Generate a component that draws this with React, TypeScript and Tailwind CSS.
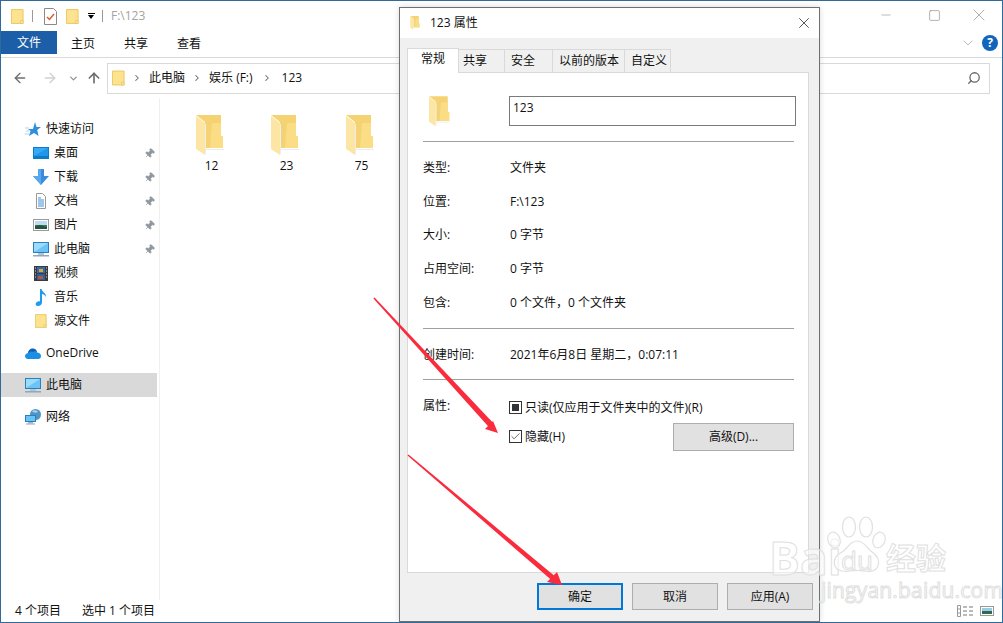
import React from 'react';
import { ArrowLeft, ArrowRight, ArrowUp, ChevronDown, ChevronRight, Minus, Search, Square, X, Pin, Check } from 'lucide-react';

const NoteFolder = ({ className = '' }: { className?: string }) => (
  <svg viewBox="0 0 14 16" className={className}>
    <path d="M.5.5h12.5v15H.5z" fill="#fde28f" stroke="#e9c65c" />
    <path d="M10.5 15.5v-3h2.5v3z" fill="#fff3c4" stroke="#e9c65c" />
  </svg>
);

const OpenFolder = ({ className = '' }: { className?: string }) => (
  <svg viewBox="0 0 28 41" className={className}>
    <path d="M9 34h19v1H11z" fill="#ececec" />
    <path d="M0 0H25V21H27V33H9V7z" fill="#f5d372" />
    <path d="M16 8H25V21H27V33H14z" fill="#fadd85" />
    <path d="M0 1L9 8V40L0 34z" fill="#fde6a3" />
    <path d="M9 8V40l1-1V10z" fill="#eeeeee" />
  </svg>
);

const Desktop = () => (
  <svg viewBox="0 0 16 12" className="w-4 h-3">
    <rect width="16" height="12" fill="#0a7cc9" />
    <path d="M1 1h14v8H1z" fill="#38aaf5" />
    <path d="M1 9L15 1v8z" fill="#1e97ea" />
  </svg>
);
const Download = () => (
  <svg viewBox="0 0 16 16" className="w-4 h-4">
    <path d="M5 0h6v7h5l-8 9-8-9h5z" fill="#3a8ce0" />
    <path d="M5 0h3v16L0 7h5z" fill="#5aa7ea" />
  </svg>
);
const Doc = () => (
  <svg viewBox="0 0 14 16" className="w-[14px] h-4">
    <path d="M2.5.5h6l3 3v12h-9z" fill="#fff" stroke="#999" />
    <path d="M4 5h3M4 7h6M4 9h6M4 11h6M4 13h6" stroke="#3c8fd6" />
  </svg>
);
const Picture = () => (
  <svg viewBox="0 0 16 12" className="w-4 h-3">
    <rect x=".5" y=".5" width="15" height="11" fill="#fff" stroke="#9a9a9a" />
    <rect x="2" y="2" width="12" height="4" fill="#bcdcf2" />
    <rect x="2" y="6" width="12" height="4" fill="#3e7a5c" />
    <path d="M2 7l5-1 7 2v2H2z" fill="#24543f" />
  </svg>
);
const Computer = () => (
  <svg viewBox="0 0 16 15" className="w-4 h-[15px]">
    <rect x=".5" y=".5" width="15" height="10" fill="#6bc3f7" stroke="#2d7fb8" />
    <path d="M1 1h14L1 10z" fill="#9bdcfc" />
    <rect x="5" y="11" width="6" height="2" fill="#b5c4d0" />
    <rect y="13" width="16" height="1.5" fill="#8fa8ba" />
  </svg>
);
const Video = () => (
  <svg viewBox="0 0 14 15" className="w-[14px] h-[15px]">
    <rect width="14" height="15" fill="#3a3a3a" />
    <rect x="3" y="1" width="8" height="6" fill="#2f6db0" />
    <rect x="3" y="8" width="8" height="6" fill="#2f5f9c" />
    <path d="M5 3h4v3H5z" fill="#d9a441" />
    <path d="M4 10h5v3H4z" fill="#b8553a" />
    <path d="M1 2h1M1 5h1M1 8h1M1 11h1M12 2h1M12 5h1M12 8h1M12 11h1" stroke="#ddd" />
  </svg>
);
const Music = () => (
  <svg viewBox="0 0 12 17" className="w-3 h-[17px]">
    <path d="M5 0h1.5c.5 3 5 4 4.500 8-.8-2-3-3-4-3v8.500c0 2-2 3.500-4 3.500S0 15.500 1 14s3-2 4-1.500z" fill="#1e9bf0" />
  </svg>
);
const OneDrive = () => (
  <svg viewBox="0 0 16 11" className="w-4 h-[11px]">
    <path d="M3 5c0-3 3-5 5.500-4.500C10.500.8 12 2.500 12 4.500z" fill="#0b5fb8" />
    <path d="M3 11C1 11 0 9.500 0 8s1.500-3 3.500-3c1-1.500 3-2 4.500-1 1-1 3-1 4 .5 2 0 4 1.500 4 3.500s-1 3-3 3z" fill="#1a8fe3" />
  </svg>
);
const Network = () => (
  <svg viewBox="0 0 16 16" className="w-4 h-4">
    <circle cx="10.500" cy="5.500" r="5.500" fill="#4f93c9" />
    <path d="M7 2c2-1.500 5-1 6 1-2 1-5 1-6-1z" fill="#a5d4f2" />
    <rect x=".5" y="6.500" width="10" height="6" fill="#6bc3f7" stroke="#2d7fb8" />
    <rect x="3" y="13" width="5" height="1.500" fill="#9fb4c4" />
    <rect x="1" y="14.500" width="9" height="1" fill="#8fa8ba" />
  </svg>
);
const Star = () => (
  <svg viewBox="0 0 16 15" className="w-4 h-[15px]">
    <path d="M10 0l1.500 5H16l-3.800 3 1.400 6L9 11l-5 3 1.600-5L3 7h5z" fill="#2f8fdc" />
    <path d="M0 6h4M1 9h3M0 12h4" stroke="#a9d2f2" />
  </svg>
);

const sideItems = [
  { name: '桌面', icon: <Desktop />, pin: true },
  { name: '下载', icon: <Download />, pin: true },
  { name: '文档', icon: <Doc />, pin: true },
  { name: '图片', icon: <Picture />, pin: true },
  { name: '此电脑', icon: <Computer />, pin: true },
  { name: '视频', icon: <Video /> },
  { name: '音乐', icon: <Music /> },
  { name: '源文件', icon: <NoteFolder className="w-3 h-4" /> },
];

function SideRoot({ icon, name, className = '' }: { icon: React.ReactNode; name: string; className?: string }) {
  return (
    <div className={`h-6 flex items-center pl-6 ${className}`}>
      <span className="w-4 flex justify-center">{icon}</span>
      <span className="ml-[5px]">{name}</span>
    </div>
  );
}

function InfoRow({ label, value }: { label: string; value: string }) {
  return (
    <div className="h-[33.75px] flex items-center">
      <span className="w-[87px]">{label}</span>
      <span>{value}</span>
    </div>
  );
}

function Tab({ label, className }: { label: string; className: string }) {
  return <div className={`h-[23px] flex items-center bg-[#f0f0f0] border-t border-r border-[#d9d9d9] ${className}`}>{label}</div>;
}

function DialogButton({ label, primary }: { label: string; primary?: boolean }) {
  return (
    <div className={`w-[86px] h-[27px] flex items-center justify-center bg-[#e1e1e1] ${primary ? 'border-2 border-[#0078d7]' : 'border border-[#adadad]'}`}>
      {label}
    </div>
  );
}

function PropertiesDialog() {
  return (
    <div className="absolute left-[398px] top-[6px] w-[421px] h-[615px] border border-[#6f6f6f] bg-[#f0f0f0] flex flex-col shadow-[0_0_6px_rgba(0,0,0,0.15)]">
      <div className="h-[30px] bg-white flex items-center pl-[10px] pr-[6px]">
        <OpenFolder className="w-[10px] h-[14px]" />
        <span className="ml-[10px]">123 属性</span>
        <X className="ml-auto w-[18px] h-[18px] text-[#222]" strokeWidth={1} />
      </div>
      <div className="flex items-end pl-[7px] h-[34px]">
        <div className="w-[52px] h-[25px] bg-white border border-b-0 border-[#d9d9d9] flex items-center justify-center relative top-px z-10 pb-[4px]">常规</div>
        <Tab label="共享" className="w-[46px] pl-[4px]" />
        <Tab label="安全" className="w-[48px] pl-[6px]" />
        <Tab label="以前的版本" className="w-[72px] pl-[6px]" />
        <Tab label="自定义" className="w-[46px] pl-[6px]" />
      </div>
      <div className="ml-[7px] mr-[10px] h-[501px] bg-white border border-[#d9d9d9] pl-[15px] pr-[14px] pt-[23px]">
        <div className="flex items-center h-[30px]">
          <span className="w-[86px] shrink-0 pl-[6px]">
            <OpenFolder className="w-[21px] h-[41px]" />
          </span>
          <div className="w-[287px] shrink-0 h-[30px] border border-[#7a7a7a] px-[3px] pt-[2px]">123</div>
        </div>
        <div className="mt-[15px] h-px bg-[#a0a0a0]" />
        <div className="mt-[9px]">
          <InfoRow label="类型:" value="文件夹" />
          <InfoRow label="位置:" value="F:\123" />
          <InfoRow label="大小:" value="0 字节" />
          <InfoRow label="占用空间:" value="0 字节" />
          <InfoRow label="包含:" value="0 个文件，0 个文件夹" />
        </div>
        <div className="mt-[8.25px] h-px bg-[#a0a0a0]" />
        <div className="mt-[9px]">
          <InfoRow label="创建时间:" value="2021年6月8日 星期二，0:07:11" />
        </div>
        <div className="mt-[7px] h-px bg-[#a0a0a0]" />
        <div className="flex mt-[18px]">
          <span className="w-[86px] leading-[16px]">属性:</span>
          <div className="flex-1 pt-[2px]">
            <div className="flex items-center h-4">
              <span className="w-[13px] h-[13px] border border-[#333] flex items-center justify-center">
                <span className="w-[7px] h-[7px] bg-[#333]" />
              </span>
              <span className="ml-[3px]">只读(仅应用于文件夹中的文件)(R)</span>
            </div>
            <div className="flex items-center justify-between mt-[7px]">
              <div className="flex items-center">
                <span className="w-[13px] h-[13px] border border-[#333] flex items-center justify-center">
                  <Check className="w-[11px] h-[11px] text-[#333]" strokeWidth={1.6} />
                </span>
                <span className="ml-[3px]">隐藏(H)</span>
              </div>
              <div className="w-[121px] h-[28px] bg-[#e1e1e1] border border-[#adadad] flex items-center justify-center">高级(D)...</div>
            </div>
          </div>
        </div>
      </div>
      <div className="flex justify-end gap-[9px] pr-[6px] mt-[10px]">
        <DialogButton label="确定" primary />
        <DialogButton label="取消" />
        <DialogButton label="应用(A)" />
      </div>
    </div>
  );
}

function Watermark() {
  const outline = 'text-white/50 [-webkit-text-stroke:1px_#e0e0e0]';
  return (
    <>
      <span className={`absolute left-[768px] top-[528px] text-[46px] font-bold leading-[56px] ${outline}`}>Bai</span>
      <svg viewBox="0 0 60 60" className="absolute left-[826px] top-[514px] w-[60px] h-[60px]" fill="rgba(255,255,255,.5)" stroke="#e0e0e0" strokeWidth="1.2">
        <ellipse cx="7" cy="25" rx="6" ry="8" transform="rotate(-20 7 25)" />
        <ellipse cx="22" cy="12" rx="6.500" ry="10" />
        <ellipse cx="39" cy="12" rx="6.500" ry="10" />
        <ellipse cx="52" cy="25" rx="6" ry="8" transform="rotate(20 52 25)" />
        <path d="M30 26c8 0 10 8 15 11 6 4 8 8 6 14-2 5-8 6-14 5-5-1-9-1-14 0-6 1-13 0-15-5-2-6 1-11 7-14 6-3 7-11 15-11z" />
      </svg>
      <span className={`absolute left-[840px] top-[544px] text-[26px] leading-[30px] ${outline}`}>du</span>
      <span className={`absolute left-[885px] top-[538px] text-[30px] font-bold leading-[38px] ${outline}`}>经验</span>
      <span className={`absolute left-[820px] top-[576px] text-[21px] leading-[26px] tracking-[0.2px] ${outline}`}>jingyan.baidu.com</span>
    </>
  );
}

function RedArrows() {
  return (
    <svg viewBox="0 0 1003 623" className="absolute -left-px -top-px w-[1003px] h-[623px] pointer-events-none">
      <path d="M374.600 297.600L493.200 423 488.800 427 373.400 298.600z" fill="#f92b3c" />
      <path d="M493 421L498 433 485 429z" fill="#f92b3c" />
      <path d="M408.500 454.400L554.600 576 551.400 580 407.500 455.600z" fill="#f92b3c" />
      <path d="M557 572L562 585 547 582z" fill="#f92b3c" />
    </svg>
  );
}

export default function App() {
  return (
    <div className="relative w-[1003px] h-[623px] overflow-hidden bg-white border border-[#2f6b9a] text-[12px] text-[#111] font-['Open_Sans','Noto_Sans_CJK_SC',sans-serif] flex flex-col">
      {/* title bar */}
      <div className="h-[30px] flex items-center pl-[10px]">
        <NoteFolder className="w-[13px] h-[15px]" />
        <span className="ml-[8px] w-px h-[12px] bg-[#999]" />
        <svg viewBox="0 0 13 17" className="ml-[11px] w-[13px] h-[17px]">
          <path d="M.5.5h9l3 3v13H.5z" fill="#fff" stroke="#8a8a8a" />
          <path d="M3 9l2.500 2.500L10 6" fill="none" stroke="#e0552a" strokeWidth="1.4" />
        </svg>
        <NoteFolder className="ml-[9px] w-[13px] h-[15px]" />
        <span className="ml-[8px] flex flex-col items-center w-[8px]">
          <span className="w-[7px] h-px bg-black mb-px" />
          <span className="border-x-[3.500px] border-x-transparent border-t-[4px] border-t-black" />
        </span>
        <span className="ml-[7px] w-px h-[12px] bg-[#999]" />
        <span className="ml-[8px] text-[#a3a3a3]">F:\123</span>
        <div className="ml-auto flex items-center pr-[13px] pb-[2px] text-[#8a8a8a]">
          <Minus className="w-[14px] h-[14px]" strokeWidth={1} />
          <Square className="ml-[35px] w-[13px] h-[13px]" strokeWidth={1.2} />
          <X className="ml-[28px] w-[20px] h-[20px]" strokeWidth={0.8} />
        </div>
      </div>
      {/* ribbon tabs */}
      <div className="h-[23px] flex items-center relative">
        <div className="w-[56px] h-[23px] bg-[#1c5fa8] text-white flex items-center justify-center pt-px">文件</div>
        <span className="ml-[14px] pt-[2px]">主页</span>
        <span className="ml-[29px] pt-[2px]">共享</span>
        <span className="ml-[29px] pt-[2px]">查看</span>
        <ChevronDown className="ml-auto w-[16px] h-[16px] text-[#aaa]" strokeWidth={1.2} />
        <span className="ml-[6px] mr-[4px] w-[16px] h-[16px] rounded-full bg-[#1166bb] text-white font-bold text-[12px] flex items-center justify-center">?</span>
      </div>
      {/* nav */}
      <div className="mt-[3px] border-t border-[#dadada] h-[41px] flex items-center">
        <ArrowLeft className="ml-[11px] w-[16px] h-[16px] text-[#6e6e6e]" strokeWidth={2} />
        <ArrowRight className="ml-[14px] w-[16px] h-[16px] text-[#d0d0d0]" strokeWidth={2} />
        <ChevronDown className="ml-[10px] w-[11px] h-[11px] text-[#8a8a8a]" strokeWidth={2.500} />
        <ArrowUp className="ml-[7px] w-[16px] h-[16px] text-[#6e6e6e]" strokeWidth={2.500} />
        <div className="ml-[5px] w-[700px] h-[31px] border border-[#d9d9d9] flex items-center pl-[4px]">
          <NoteFolder className="w-[13px] h-[16px]" />
          <ChevronRight className="ml-[7px] w-[10px] h-[10px] text-[#666]" strokeWidth={2.500} />
          <span className="ml-[7px]">此电脑</span>
          <ChevronRight className="ml-[7px] w-[10px] h-[10px] text-[#666]" strokeWidth={2.500} />
          <span className="ml-[7px]">娱乐 (F:)</span>
          <ChevronRight className="ml-[9px] w-[10px] h-[10px] text-[#666]" strokeWidth={2.500} />
          <span className="ml-[10px]">123</span>
        </div>
        <div className="ml-[5px] w-[178px] h-[31px] border border-[#d9d9d9] flex items-center justify-end pr-[8px]">
          <Search className="w-[14px] h-[14px] text-[#666] -scale-x-100" strokeWidth={2.200} />
        </div>
      </div>
      {/* body */}
      <div className="flex-1 flex min-h-0">
        <div className="w-[159px] border-r border-[#f0f0f0] pt-[19px]">
          <SideRoot icon={<Star />} name="快速访问" />
          {sideItems.map(item => (
            <div key={item.name} className="h-6 flex items-center pl-8">
              <span className="w-4 flex justify-center">{item.icon}</span>
              <span className="ml-[5px]">{item.name}</span>
              {item.pin && <Pin className="ml-auto mr-[4px] w-[11px] h-[11px] text-[#8f979e] fill-[#8f979e] rotate-45" strokeWidth={1.500} />}
            </div>
          ))}
          <SideRoot icon={<OneDrive />} name="OneDrive" className="mt-[8px]" />
          <SideRoot icon={<Computer />} name="此电脑" className="mt-[8px] bg-[#d9d9d9] mr-[2px]" />
          <SideRoot icon={<Network />} name="网络" className="mt-[8px]" />
        </div>
        <div className="flex-1 pl-[14px] pt-[17px] flex items-start">
          {['12', '23', '75'].map(label => (
            <div key={label} className="w-[75px] flex flex-col items-center">
              <OpenFolder className="w-[28px] h-[41px] mr-[4px]" />
              <span className="mt-[1px]">{label}</span>
            </div>
          ))}
        </div>
      </div>
      {/* status bar */}
      <div className="h-[22px] flex items-center pl-[14px] pr-[8px] pb-px">
        <span>4 个项目</span>
        <span className="ml-[21px]">选中 1 个项目</span>
        <svg viewBox="0 0 17 12" className="ml-auto w-[17px] h-[12px]">
          <path d="M.5.500h3v11h-3zM.5 4h3M.5 8h3" fill="none" stroke="#999" />
          <path d="M6 2h4M12 2h4M6 6h4M12 6h4M6 10h4M12 10h4" stroke="#777" />
        </svg>
        <span className="ml-[6px]"><svg viewBox="0 0 14 10" className="w-[14px] h-[10px]"><rect x=".5" y=".5" width="13" height="9" fill="#fff" stroke="#999" /><rect x="2" y="2" width="10" height="3" fill="#9ccbe8" /><rect x="2" y="5" width="10" height="3" fill="#2f6a4f" /></svg></span>
      </div>
      <PropertiesDialog />
      <Watermark />
      <RedArrows />
    </div>
  );
}
